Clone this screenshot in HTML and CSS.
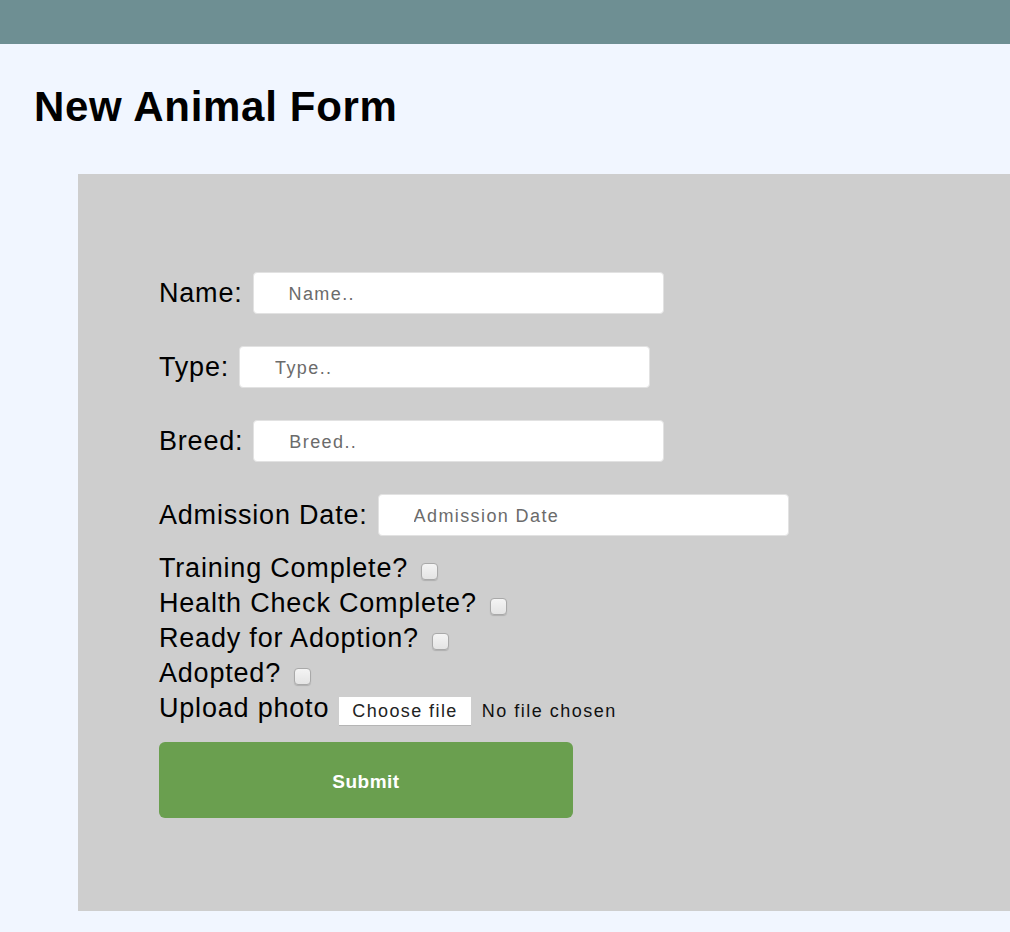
FILE: index.html
```html
<!DOCTYPE html>
<html lang="en">
<head>
<meta charset="utf-8">
<title>New Animal Form</title>
<link rel="stylesheet" href="styles.css">
</head>
<body>
<header class="topbar"></header>
<main>
  <h1 class="title">New Animal Form</h1>
  <form class="form-box">
    <div class="field">
      <label class="label" for="name">Name:</label>
      <input class="text-input" id="name" type="text" placeholder="Name..">
    </div>
    <div class="field">
      <label class="label" for="type">Type:</label>
      <input class="text-input" id="type" type="text" placeholder="Type..">
    </div>
    <div class="field">
      <label class="label" for="breed">Breed:</label>
      <input class="text-input" id="breed" type="text" placeholder="Breed..">
    </div>
    <div class="field field-last">
      <label class="label" for="adm">Admission Date:</label>
      <input class="text-input" id="adm" type="text" placeholder="Admission Date">
    </div>
    <div class="check-list">
      <div class="check-line"><label class="label">Training Complete?</label><input class="check" type="checkbox"></div>
      <div class="check-line"><label class="label">Health Check Complete?</label><input class="check" type="checkbox"></div>
      <div class="check-line"><label class="label">Ready for Adoption?</label><input class="check" type="checkbox"></div>
      <div class="check-line"><label class="label">Adopted?</label><input class="check" type="checkbox"></div>
      <div class="check-line"><span class="label">Upload photo</span><label class="file"><input class="file-input" type="file"><span class="file-btn">Choose file</span><span class="file-name">No file chosen</span></label></div>
    </div>
    <button class="submit" type="button">Submit</button>
  </form>
</main>
</body>
</html>
```

FILE: styles.css
```css
html, body {
  margin: 0;
  padding: 0;
}
body {
  background: #f1f6ff;
  font-family: "Liberation Sans", Arial, Helvetica, sans-serif;
  color: #000;
  overflow-x: hidden;
}
.topbar {
  height: 44px;
  background: #6e8f93;
}
.title {
  margin: 39px 0 43px 34px;
  font-size: 42px;
  letter-spacing: 0.7px;
  font-weight: bold;
  line-height: normal;
}
.form-box {
  margin-left: 78px;
  background: #cecece;
  padding: 98px 0 93px 81px;
}
.field {
  display: flex;
  align-items: center;
  gap: 10px;
  margin-bottom: 32px;
}
.field-last {
  margin-bottom: 15px;
}
.label {
  font-size: 27px;
  letter-spacing: 0.8px;
  line-height: normal;
}
.text-input {
  box-sizing: border-box;
  width: 411px;
  height: 42px;
  border: 1px solid #e2e2e2;
  border-radius: 4px;
  background: #fff;
  padding: 2px 0 0 35px;
  font-family: "Liberation Sans", Arial, sans-serif;
  font-size: 18px;
  letter-spacing: 1.4px;
  color: #333;
  outline: none;
}
.text-input::placeholder {
  color: #6b6b6b;
}
.check-line {
  line-height: 35px;
  height: 35px;
  white-space: nowrap;
}
.check-line .label {
  line-height: 35px;
}
.check {
  appearance: none;
  -webkit-appearance: none;
  display: inline-block;
  box-sizing: border-box;
  width: 17px;
  height: 17px;
  margin: 0 0 0 13px;
  vertical-align: -3px;
  border: 1px solid #a9a9a9;
  border-radius: 4px;
  background: linear-gradient(#f4f4f4, #e4e4e4);
  box-shadow: 0 1px 1px rgba(0, 0, 0, 0.15);
}
.file {
  margin-left: 10px;
}
.file-input {
  display: none;
}
.file-btn {
  display: inline-block;
  background: #fff;
  border-bottom: 1px solid #b5b5b5;
  padding: 4px 13px 3px;
  font-size: 18px;
  letter-spacing: 1.4px;
  line-height: 21px;
  color: #222;
}
.file-name {
  margin-left: 11px;
  font-size: 18px;
  letter-spacing: 1.5px;
  color: #111;
}
.submit {
  display: block;
  margin-top: 16px;
  width: 414px;
  height: 76px;
  border: none;
  border-radius: 6px;
  background: #6a9f4f;
  color: #fff;
  font-family: "Liberation Sans", Arial, sans-serif;
  font-size: 19px;
  font-weight: bold;
  letter-spacing: 0.5px;
  padding-top: 4px;
  cursor: pointer;
}
```
